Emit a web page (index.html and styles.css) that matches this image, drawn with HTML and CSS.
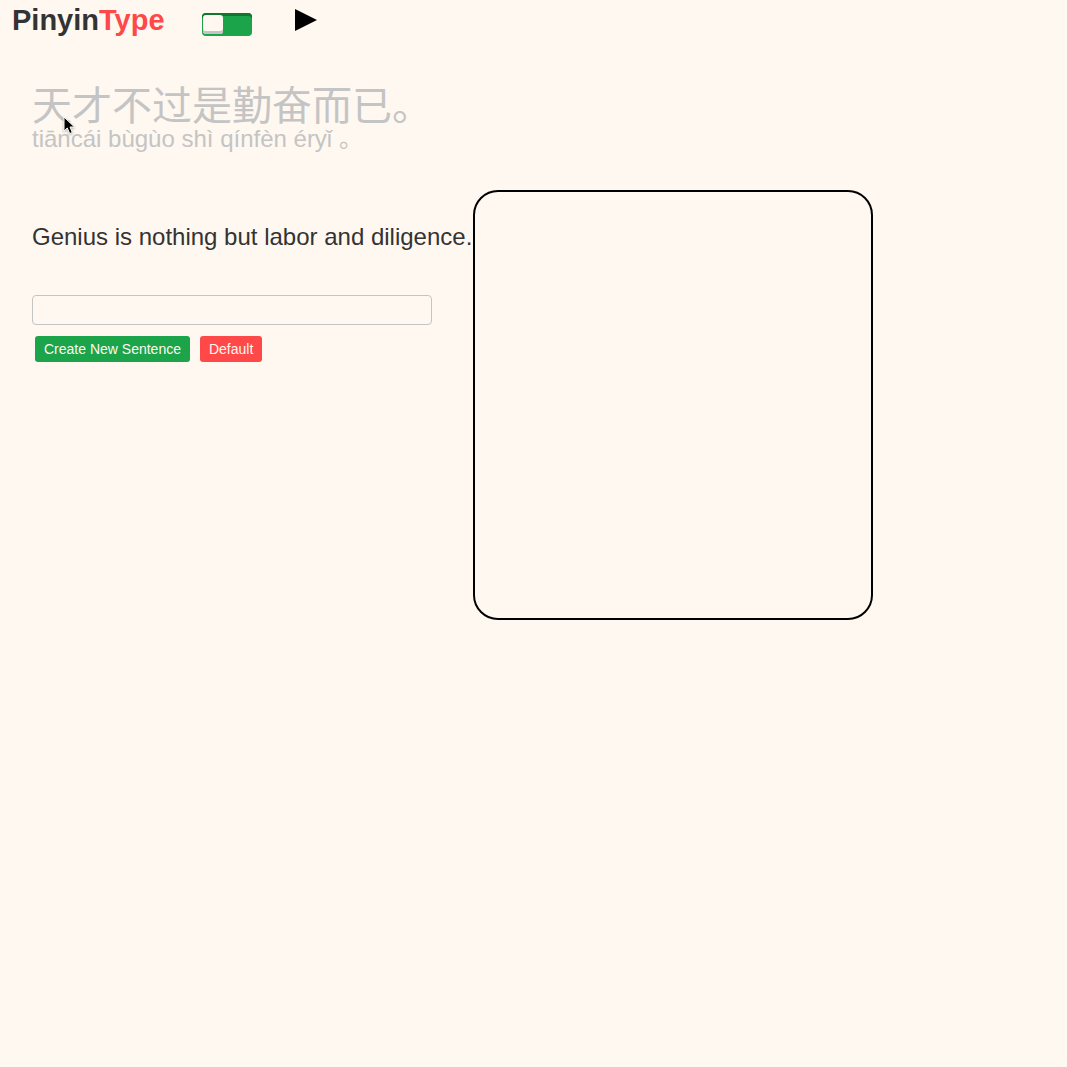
FILE: index.html
```html
<!DOCTYPE html>
<html lang="en">
<head>
  <meta charset="utf-8">
  <meta name="viewport" content="width=device-width, initial-scale=1">
  <title>PinyinType</title>
  <link rel="stylesheet" href="styles.css">
</head>
<body>
  <header class="header">
    <h1 class="brand">Pinyin<span class="brand-accent">Type</span></h1>
    <input class="switch" type="checkbox" role="switch" aria-label="Show pinyin">
    <button class="play" type="button" aria-label="Play">
      <svg width="22" height="22" viewBox="0 0 22 22" aria-hidden="true"><path d="M0 0 22 11 0 22Z"/></svg>
    </button>
  </header>

  <main class="main">
    <section class="sentence">
      <p class="hanzi" lang="zh-CN">天才不过是勤奋而已。</p>
      <p class="pinyin">tiāncái bùgùo shì qínfèn éryǐ <span lang="zh-CN">。</span></p>
      <svg class="pointer" width="14" height="20" viewBox="0 0 14 20" aria-hidden="true">
        <path d="M1 1V15L4.300 12 6.700 17.600 9.300 16.500 7 11H11.500Z" fill="#000" stroke="#fff" stroke-width="1"/>
      </svg>
    </section>

    <div class="workspace">
      <div class="practice">
        <p class="translation">Genius is nothing but labor and diligence.</p>
        <form class="form">
          <input class="answer" type="text" aria-label="Sentence">
          <div class="actions">
            <button class="button button-create" type="button">Create New Sentence</button>
            <button class="button button-default" type="button">Default</button>
          </div>
        </form>
      </div>
      <div class="panel"></div>
    </div>
  </main>
</body>
</html>
```

FILE: styles.css
```css
* {
  box-sizing: border-box;
}

body {
  margin: 0;
  background: #fff8f0;
  color: #333;
  font-family: "Liberation Sans", Arial, "Noto Sans CJK SC", sans-serif;
}

h1,
p {
  margin: 0;
}

.header {
  display: flex;
  align-items: center;
  height: 40px;
  padding-left: 12px;
}

.brand {
  width: 190px;
  font-size: 29px;
  line-height: 40px;
}

.brand-accent {
  color: #ff4848;
}

.switch {
  appearance: none;
  width: 50px;
  height: 23px;
  margin: 8px 43px 0 0;
  padding: 2px 1px 1px;
  border-radius: 4px;
  background: #1ca44a;
  box-shadow: inset 0 3px 0 #14752f;
}

.switch::before {
  content: "";
  display: block;
  width: 20px;
  height: 19px;
  border-radius: 3px;
  background: #fff8f0;
  box-shadow: inset 0 -3px 0 #c4c4c4;
}

.switch:checked::before {
  margin-left: auto;
}

.play {
  display: flex;
  padding: 0;
  border: 0;
  background: none;
}

.main {
  padding: 46px 32px 0;
}

.sentence {
  position: relative;
  color: #c4c4c4;
}

.hanzi {
  font-size: 40px;
  line-height: 40px;
}

.pinyin {
  font-size: 24px;
  line-height: 26px;
}

.pointer {
  position: absolute;
  top: 30px;
  left: 31px;
  filter: drop-shadow(0 1px 1px rgba(0, 0, 0, 0.3));
}

.workspace {
  display: flex;
  align-items: flex-start;
  margin-top: 38px;
}

.practice {
  width: 441px;
  padding-top: 32px;
}

.translation {
  font-size: 24px;
  line-height: 30px;
  white-space: nowrap;
}

.form {
  margin-top: 43px;
}

.answer {
  display: block;
  width: 400px;
  height: 30px;
  padding: 4px 8px;
  border: 1px solid #c4c4c4;
  border-radius: 4px;
  background: transparent;
  font: inherit;
  font-size: 16px;
}

.actions {
  display: flex;
  gap: 10px;
  margin-top: 11px;
  padding-left: 3px;
}

.button {
  height: 26px;
  padding: 0 9px;
  border: 0;
  border-radius: 3px;
  color: #fff8f0;
  font-family: inherit;
  font-size: 14px;
  line-height: 26px;
}

.button-create {
  background: #1ca44a;
}

.button-default {
  background: #ff4848;
}

.panel {
  width: 400px;
  height: 430px;
  border: 2px solid #000;
  border-radius: 25px;
}
```
